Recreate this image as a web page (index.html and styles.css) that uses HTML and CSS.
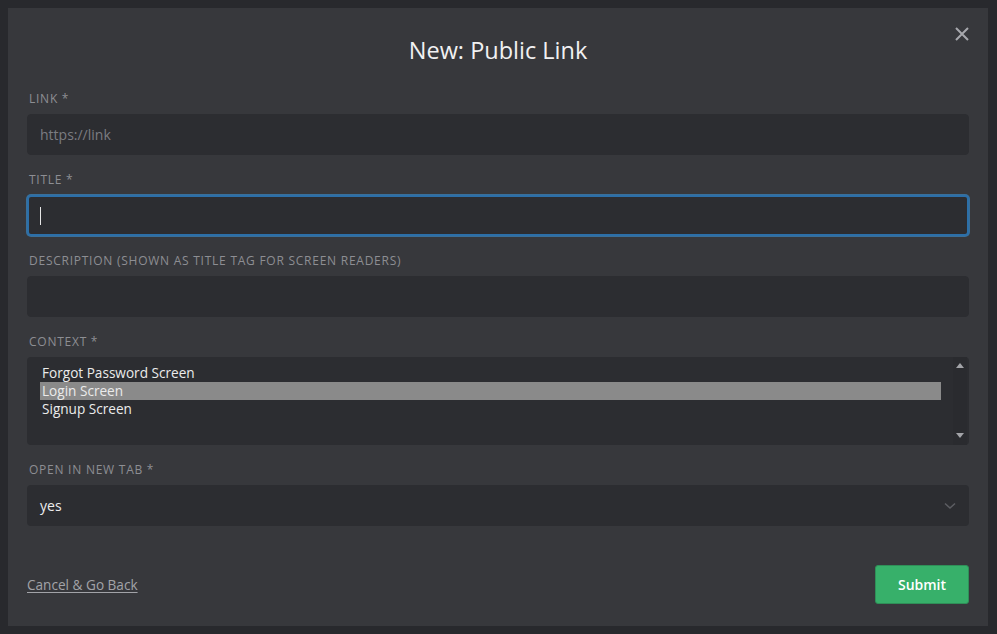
FILE: index.html
```html
<!DOCTYPE html>
<html>
<head>
<meta charset="utf-8">
<link rel="stylesheet" href="styles.css">
</head>
<body>
<div class="backdrop">
  <div class="modal">
    <button class="close" aria-label="Close">
      <svg width="14" height="14" viewBox="0 0 14 14"><path d="M1 1 L13 13 M13 1 L1 13" stroke="#a7a8ad" stroke-width="2" fill="none"/></svg>
    </button>
    <h1 class="title">New: Public Link</h1>
    <form class="form">
      <div class="field">
        <label class="label">Link *</label>
        <input class="input" type="text" placeholder="https://link">
      </div>
      <div class="field">
        <label class="label">Title *</label>
        <div class="input-wrap">
          <input class="input input-focus" type="text">
          <span class="caret"></span>
        </div>
      </div>
      <div class="field">
        <label class="label">Description (shown as title tag for screen readers)</label>
        <input class="input" type="text">
      </div>
      <div class="field">
        <label class="label">Context *</label>
        <div class="listbox">
          <div class="options">
            <div class="option">Forgot Password Screen</div>
            <div class="option selected">Login Screen</div>
            <div class="option">Signup Screen</div>
          </div>
          <div class="scrollbar">
            <span class="arrow up"></span>
            <span class="arrow down"></span>
          </div>
        </div>
      </div>
      <div class="field">
        <label class="label">Open in new tab *</label>
        <div class="select">
          <span>yes</span>
          <svg width="12" height="8" viewBox="0 0 12 8"><path d="M1 1.5 L6 6 L11 1.5" stroke="#5c5d62" stroke-width="1.6" fill="none"/></svg>
        </div>
      </div>
      <div class="footer">
        <a class="cancel" href="#">Cancel &amp; Go Back</a>
        <button class="submit" type="button">Submit</button>
      </div>
    </form>
  </div>
</div>
</body>
</html>
```
FILE: styles.css
```css
html, body {
  margin: 0;
  padding: 0;
}
body {
  background: #28292d;
  font-family: "Open Sans", "Noto Sans", sans-serif;
  width: 997px;
  height: 634px;
  overflow: hidden;
}
.backdrop {
  padding-top: 8px;
}
.modal {
  position: relative;
  width: 980px;
  height: 618px;
  margin: 0 0 0 8px;
  background: #37383c;
  box-sizing: border-box;
  padding: 18px 19px 0 19px;
}
.close {
  position: absolute;
  top: 19px;
  right: 19px;
  background: none;
  border: 0;
  padding: 0;
  width: 14px;
  height: 14px;
  cursor: pointer;
}
.close svg { display: block; }
.title {
  margin: 0 0 16px 0;
  text-align: center;
  font-size: 23.5px;
  line-height: 48px;
  font-weight: 500;
  color: #f1f1f2;
}
.form {
  display: flex;
  flex-direction: column;
}
.field {
  display: flex;
  flex-direction: column;
  margin-bottom: 16px;
}
.label {
  font-size: 12px;
  line-height: 16px;
  letter-spacing: 0.75px;
  text-transform: uppercase;
  color: #8d8e93;
  margin: 1px 0 7px 2px;
}
.input {
  height: 41px;
  box-sizing: border-box;
  background: #2c2d31;
  border: 1px solid #2c2d31;
  border-radius: 4px;
  padding: 0 12px;
  font-family: inherit;
  font-size: 14px;
  color: #e8e8e8;
  outline: none;
  width: 100%;
}
.input::placeholder {
  color: #7b7c81;
}
.input-wrap {
  position: relative;
}
.input-focus {
  border: 2px solid #2c6fa8;
  box-shadow: 0 0 0 1px #3a6f99;
}
.caret {
  position: absolute;
  left: 13px;
  top: 12px;
  width: 1px;
  height: 18px;
  background: #e6e6e6;
}
.listbox {
  height: 88px;
  box-sizing: border-box;
  background: #2c2d31;
  border-radius: 4px;
  display: flex;
  padding: 7px 2px 0 13px;
}
.options {
  flex: 1;
}
.option {
  font-size: 13.6px;
  line-height: 18px;
  color: #ebebeb;
  padding-left: 2px;
}
.option.selected {
  background: #8a8a8a;
}
.scrollbar {
  width: 14px;
  margin-left: 12px;
  margin-top: -7px;
  height: 88px;
  background: #2a2b2f;
  position: relative;
}
.arrow {
  position: absolute;
  left: 3px;
  width: 0;
  height: 0;
  border-left: 4px solid transparent;
  border-right: 4px solid transparent;
}
.arrow.up {
  top: 6px;
  border-bottom: 5px solid #a3a4a8;
}
.arrow.down {
  bottom: 7px;
  border-top: 5px solid #a3a4a8;
}
.select {
  height: 41px;
  box-sizing: border-box;
  background: #2c2d31;
  border-radius: 4px;
  display: flex;
  align-items: center;
  justify-content: space-between;
  padding: 0 13px 0 13px;
  font-size: 14px;
  color: #ececec;
}
.footer {
  display: flex;
  justify-content: space-between;
  align-items: center;
  margin-top: 23px;
}
.cancel {
  font-size: 13.6px;
  color: #a2a3a8;
  text-decoration: underline;
  text-underline-offset: 2px;
}
.submit {
  width: 94px;
  height: 39px;
  background: #37b06a;
  border: 1px solid #2f8f58;
  border-radius: 3px;
  color: #ffffff;
  font-family: inherit;
  font-size: 14px;
  font-weight: 600;
  cursor: pointer;
}
```
